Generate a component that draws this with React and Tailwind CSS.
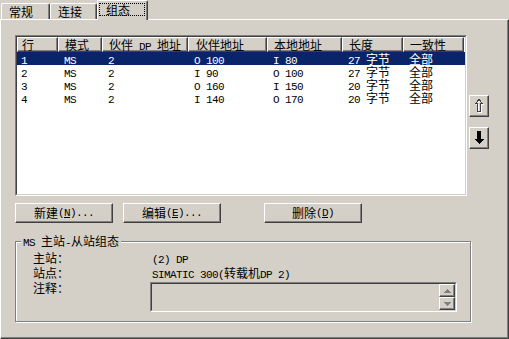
import React from "react";

const columns = [
  { label: "行", w: "w-[41px]", pl: "pl-[4px]" },
  { label: "模式", w: "w-[44px]", pl: "pl-[6px]" },
  { label: "伙伴 DP 地址", w: "w-[86px]", pl: "pl-[6px]" },
  { label: "伙伴地址", w: "w-[79px]", pl: "pl-[7px]" },
  { label: "本地地址", w: "w-[75px]", pl: "pl-[6px]" },
  { label: "长度", w: "w-[61px]", pl: "pl-[6px]" },
  { label: "一致性", w: "w-[61px]", pl: "pl-[6px]" },
];

const rows = [
  ["1", "MS", "2", "O 100", "I 80", "27 字节", "全部"],
  ["2", "MS", "2", "I 90", "O 100", "27 字节", "全部"],
  ["3", "MS", "2", "O 160", "I 150", "20 字节", "全部"],
  ["4", "MS", "2", "I 140", "O 170", "20 字节", "全部"],
];

// latin runs get the narrow mono face, CJK stays on Noto
const Txt = ({ s }) =>
  s.split(/([\x20-\x7e]+)/).map((part, i) =>
    /^[\x20-\x7e]+$/.test(part) ? (
      <span
        key={i}
        className="font-['Liberation_Mono',monospace] text-[11px] tracking-[-0.6px]"
      >
        {part}
      </span>
    ) : (
      part
    )
  );

const Raised = ({ className = "", children }) => (
  <div
    className={`border border-t-white border-l-white border-r-[#404040] border-b-[#404040] shadow-[inset_-1px_-1px_0_#808080] bg-[#d4d0c8] ${className}`}
  >
    {children}
  </div>
);

const Button = ({ className = "", children }) => (
  <Raised
    className={`h-[20px] w-[98px] flex items-center justify-center leading-[14px] ${className}`}
  >
    {children}
  </Raised>
);

const Tab = ({ label, w }) => (
  <div
    className={`${w} h-[16px] flex items-start pl-[7px] pt-[1px] leading-[14px] border-t border-l border-r border-t-white border-l-white border-r-[#404040] shadow-[inset_-1px_0_0_#808080] rounded-tl-[2px] rounded-tr-[2px]`}
  >
    {label}
  </div>
);

const UpArrow = () => (
  <svg width="10" height="14" viewBox="0 0 10 14" shapeRendering="crispEdges">
    <path d="M6 1.5 L9.5 5.5 L7.5 5.5 L7.5 13.5 L4.5 13.5 L4.5 5.5 L2.5 5.5 Z" fill="none" stroke="#ffffff" />
    <path d="M5 0.5 L8.5 4.5 L6.5 4.5 L6.5 12.5 L3.5 12.5 L3.5 4.5 L1.5 4.5 Z" fill="none" stroke="#404040" />
  </svg>
);

const DownArrow = () => (
  <svg width="10" height="14" viewBox="0 0 10 14" shapeRendering="crispEdges">
    <path d="M3 0 H7 V8 H10 L5 13 L0 8 H3 Z" fill="#000000" />
  </svg>
);

const SmallTri = ({ down }) => (
  <svg width="7" height="4" viewBox="0 0 7 4" shapeRendering="crispEdges">
    <path d={down ? "M0 0 H7 L3.5 4 Z" : "M0 4 H7 L3.5 0 Z"} fill="#808080" />
  </svg>
);

const App = () => {
  return (
    <div className="w-[509px] h-[339px] bg-[#d4d0c8] text-black text-[12px] font-['Noto_Sans_CJK_SC',sans-serif] flex flex-col overflow-hidden select-none">
      {/* Tabs */}
      <div className="flex items-end h-[19px] pl-[1px]">
        <Tab label="常规" w="w-[49px]" />
        <Tab label="连接" w="w-[47px]" />
        <div className="relative z-10 -mb-[1px] w-[51px] h-[20px] pt-[2px] pl-[1px] border-t border-l border-r border-t-white border-l-white border-r-[#404040] shadow-[inset_-1px_0_0_#808080] bg-[#d4d0c8] rounded-tl-[2px] rounded-tr-[2px]">
          <div className="w-[46px] h-[13px] border border-dotted border-black flex items-center pl-[6px] leading-[12px]">
            组态
          </div>
        </div>
      </div>

      {/* Panel */}
      <div className="flex-1 border border-t-white border-l-white border-r-[#404040] border-b-[#404040] shadow-[inset_-1px_-1px_0_#808080] pl-[14px] pt-[15px]">
        <div className="flex items-start gap-[2px]">
          {/* List */}
          <div className="w-[452px] h-[161px] border border-t-[#808080] border-l-[#808080] border-b-white border-r-white">
            <div className="h-full border border-t-[#404040] border-l-[#404040] border-b-[#d4d0c8] border-r-[#d4d0c8] bg-white">
              <div className="flex">
                {columns.map((c) => (
                  <Raised
                    key={c.label}
                    className={`${c.w} ${c.pl} h-[15px] leading-[13px] shrink-0`}
                  >
                    <Txt s={c.label} />
                  </Raised>
                ))}
              </div>
              {rows.map((r, i) => (
                <div
                  key={i}
                  className={`flex h-[13px] leading-[13px] ${
                    i === 0 ? "bg-[#0a246a] text-white" : ""
                  }`}
                >
                  {r.map((cell, j) => (
                    <div
                      key={j}
                      className={`${columns[j].w} ${
                        j === 0 ? "pl-[4px]" : "pl-[6px]"
                      } shrink-0 whitespace-nowrap`}
                    >
                      <Txt s={cell} />
                    </div>
                  ))}
                </div>
              ))}
            </div>
          </div>

          {/* Move buttons */}
          <div className="flex flex-col gap-[10px] mt-[60px]">
            <Raised className="w-[20px] h-[22px] flex items-center justify-center">
              <UpArrow />
            </Raised>
            <Raised className="w-[20px] h-[22px] flex items-center justify-center">
              <DownArrow />
            </Raised>
          </div>
        </div>

        {/* Action buttons */}
        <div className="flex mt-[7px]">
          <Button>
            新建<span className="font-['Liberation_Mono',monospace] text-[11px] tracking-[-0.6px]">(<u>N</u>)...</span>
          </Button>
          <Button className="ml-[10px]">
            编辑<span className="font-['Liberation_Mono',monospace] text-[11px] tracking-[-0.6px]">(<u>E</u>)...</span>
          </Button>
          <Button className="ml-[43px]">
            删除<span className="font-['Liberation_Mono',monospace] text-[11px] tracking-[-0.6px]">(<u>D</u>)</span>
          </Button>
        </div>

        {/* Group box */}
        <div className="relative mt-[18px] w-[456px] h-[81px] border border-[#808080] shadow-[inset_1px_1px_0_#ffffff,1px_1px_0_#ffffff] pl-[17px] pt-[8px]">
          <div className="absolute -top-[8px] left-[5px] px-[2px] bg-[#d4d0c8] leading-[14px]">
            <Txt s="MS 主站-从站组态" />
          </div>
          <div className="flex h-[15px] leading-[15px]">
            <div className="w-[119px]">主站：</div>
            <div>
              <Txt s="(2) DP" />
            </div>
          </div>
          <div className="flex h-[15px] leading-[15px]">
            <div className="w-[119px]">站点：</div>
            <div className="whitespace-nowrap">
              <Txt s="SIMATIC 300(转载机DP 2)" />
            </div>
          </div>
          <div className="flex">
            <div className="w-[117px] leading-[15px]">注释：</div>
            <div className="mt-[2px] w-[307px] h-[30px] border border-t-[#808080] border-l-[#808080] border-b-white border-r-white">
              <div className="h-full border border-t-[#404040] border-l-[#404040] border-b-[#d4d0c8] border-r-[#d4d0c8] flex justify-end">
                <div className="flex flex-col">
                  <Raised className="w-[16px] h-[13px] flex items-center justify-center">
                    <SmallTri />
                  </Raised>
                  <Raised className="w-[16px] h-[13px] flex items-center justify-center">
                    <SmallTri down />
                  </Raised>
                </div>
              </div>
            </div>
          </div>
        </div>
      </div>
    </div>
  );
};

export default App;
